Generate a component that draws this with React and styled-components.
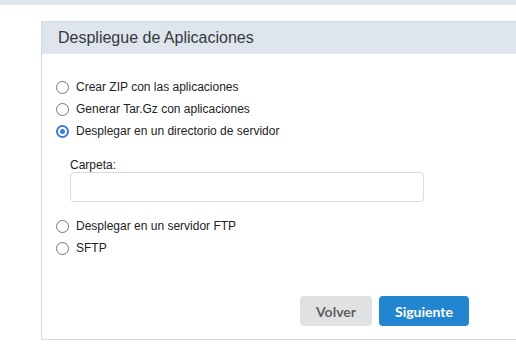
import React, { useState } from 'react';
import styled, { createGlobalStyle } from 'styled-components';

const GlobalStyle = createGlobalStyle`
  html, body {
    margin: 0;
    padding: 0;
    background: #fff;
    overflow: hidden;
  }
  body {
    font-family: "Liberation Sans", Arial, sans-serif;
  }
`;

const TopBar = styled.div`
  height: 5px;
  background: #dfe5ec;
`;

const Page = styled.div`
  padding: 16px 0 0 41px;
  overflow: hidden;
`;

const Panel = styled.div`
  width: 520px;
  border: 1px solid #d3dbe2;
  background: #fff;
`;

const PanelHeader = styled.div`
  height: 32px;
  background: #dfe5ec;
  display: flex;
  align-items: center;
  padding-left: 16px;
  font-size: 16px;
  color: #34393f;
`;

const PanelBody = styled.div`
  padding: 22px 0 13px 14px;
`;

const RadioRow = styled.label`
  display: flex;
  align-items: center;
  height: 22px;
  font-size: 12px;
  color: #222;
  cursor: pointer;
`;

const RadioCircle = styled.span`
  box-sizing: border-box;
  width: 13px;
  height: 13px;
  border-radius: 50%;
  border: ${(p) => (p.checked ? '2px solid #3b7dd8' : '1.5px solid #767676')};
  margin-right: 7px;
  display: flex;
  align-items: center;
  justify-content: center;

  &::after {
    content: '';
    display: ${(p) => (p.checked ? 'block' : 'none')};
    width: 5px;
    height: 5px;
    border-radius: 50%;
    background: #3b7dd8;
  }
`;

const FolderField = styled.div`
  padding: 16px 0 13px 14px;
  display: flex;
  flex-direction: column;
`;

const FieldLabel = styled.span`
  font-size: 12px;
  line-height: 14px;
  color: #222;
`;

const TextInput = styled.input`
  box-sizing: border-box;
  width: 354px;
  height: 30px;
  margin: 0;
  border: 1px solid #dcdcdc;
  border-radius: 4px;
  outline: none;
`;

const Actions = styled.div`
  display: flex;
  gap: 7px;
  padding: 37px 0 0 244px;
`;

const Button = styled.button`
  height: 30px;
  padding: 0 16px;
  border: none;
  border-radius: 4px;
  font-family: Lato, "Open Sans", sans-serif;
  font-weight: 700;
  font-size: 14px;
  background: ${(p) => (p.primary ? '#2185d0' : '#e0e1e2')};
  color: ${(p) => (p.primary ? '#fff' : 'rgba(0,0,0,0.6)')};
  cursor: pointer;
`;

const options = [
  'Crear ZIP con las aplicaciones',
  'Generar Tar.Gz con aplicaciones',
  'Desplegar en un directorio de servidor',
];

const moreOptions = ['Desplegar en un servidor FTP', 'SFTP'];

const Radio = ({ label, checked, onSelect }) => (
  <RadioRow onClick={onSelect}>
    <RadioCircle checked={checked} />
    {label}
  </RadioRow>
);

const App = () => {
  const [selected, setSelected] = useState(options[2]);

  return (
    <>
      <GlobalStyle />
      <TopBar />
      <Page>
        <Panel>
          <PanelHeader>Despliegue de Aplicaciones</PanelHeader>
          <PanelBody>
            {options.map((o) => (
              <Radio key={o} label={o} checked={selected === o} onSelect={() => setSelected(o)} />
            ))}
            <FolderField>
              <FieldLabel>Carpeta:</FieldLabel>
              <TextInput type="text" />
            </FolderField>
            {moreOptions.map((o) => (
              <Radio key={o} label={o} checked={selected === o} onSelect={() => setSelected(o)} />
            ))}
            <Actions>
              <Button>Volver</Button>
              <Button primary>Siguiente</Button>
            </Actions>
          </PanelBody>
        </Panel>
      </Page>
    </>
  );
};

export default App;
